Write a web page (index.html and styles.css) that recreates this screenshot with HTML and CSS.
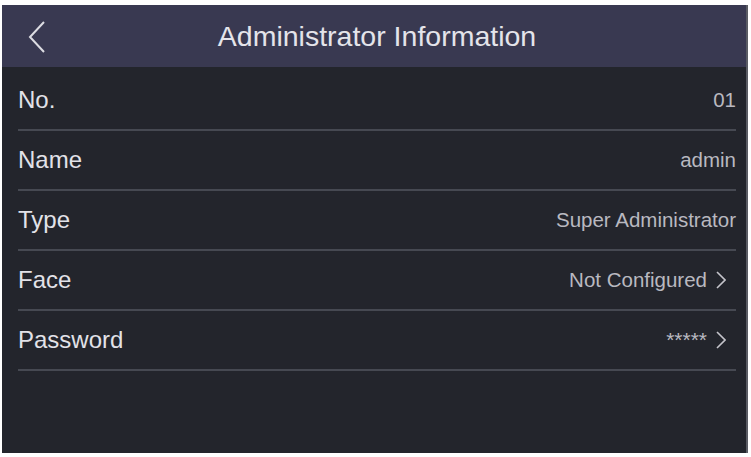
FILE: index.html
```html
<!DOCTYPE html>
<html lang="en">
<head>
    <meta charset="UTF-8">
    <meta name="viewport" content="width=device-width, initial-scale=1.0">
    <title>Administrator Information</title>
    <link rel="stylesheet" href="styles.css">
</head>
<body>
    <div class="screen">
        <!-- Top bar -->
        <div class="header">
            <div class="back">
                <svg width="20" height="34" viewBox="0 0 20 34">
                    <polyline points="16,2 2,17 16,32" fill="none" stroke="#dcdce2" stroke-width="2"/>
                </svg>
            </div>
            <div class="title">Administrator Information</div>
        </div>

        <div class="list">
            <div class="row">
                <div class="label">No.</div>
                <div class="value">01</div>
            </div>
            <div class="row">
                <div class="label">Name</div>
                <div class="value">admin</div>
            </div>
            <div class="row">
                <div class="label">Type</div>
                <div class="value">Super Administrator</div>
            </div>
            <div class="row">
                <div class="label">Face</div>
                <div class="value">Not Configured
                    <svg class="arrow" width="10" height="18" viewBox="0 0 10 18">
                        <polyline points="1,1 9,9 1,17" fill="none" stroke="#c4c4ca" stroke-width="1.6"/>
                    </svg>
                </div>
            </div>
            <div class="row">
                <div class="label">Password</div>
                <div class="value"><span class="stars">*****</span>
                    <svg class="arrow" width="10" height="18" viewBox="0 0 10 18">
                        <polyline points="1,1 9,9 1,17" fill="none" stroke="#c4c4ca" stroke-width="1.6"/>
                    </svg>
                </div>
            </div>
        </div>
    </div>
</body>
</html>
```

FILE: styles.css
```css
body {
    margin: 0;
    padding: 5px 5px 4px 2px;
    background-color: #ffffff;
    font-family: 'Liberation Sans', Arial, sans-serif;
}

.screen {
    width: 744px;
    height: 448px;
    background-color: #23252c;
    border-right: 2px solid #5a5c64;
    display: flex;
    flex-direction: column;
}

.header {
    height: 62px;
    background-color: #393951;
    display: flex;
    align-items: center;
    position: relative;
}

.back {
    position: absolute;
    left: 26px;
    top: 15px;
}

.title {
    flex: 1;
    text-align: center;
    color: #e4e4ea;
    font-size: 28.5px;
    padding-left: 6px;
}

.list {
    padding-top: 4px;
}

.row {
    height: 58px;
    margin: 0 10px 0 16px;
    border-bottom: 2px solid #464952;
    display: flex;
    align-items: center;
    justify-content: space-between;
}

.label {
    color: #e2e2e8;
    font-size: 24px;
}

.value {
    color: #b9b9c0;
    font-size: 20.5px;
    display: flex;
    align-items: center;
    gap: 9px;
}

.stars {
    font-size: 21px;
}

.arrow {
    margin-right: 10px;
}
```
